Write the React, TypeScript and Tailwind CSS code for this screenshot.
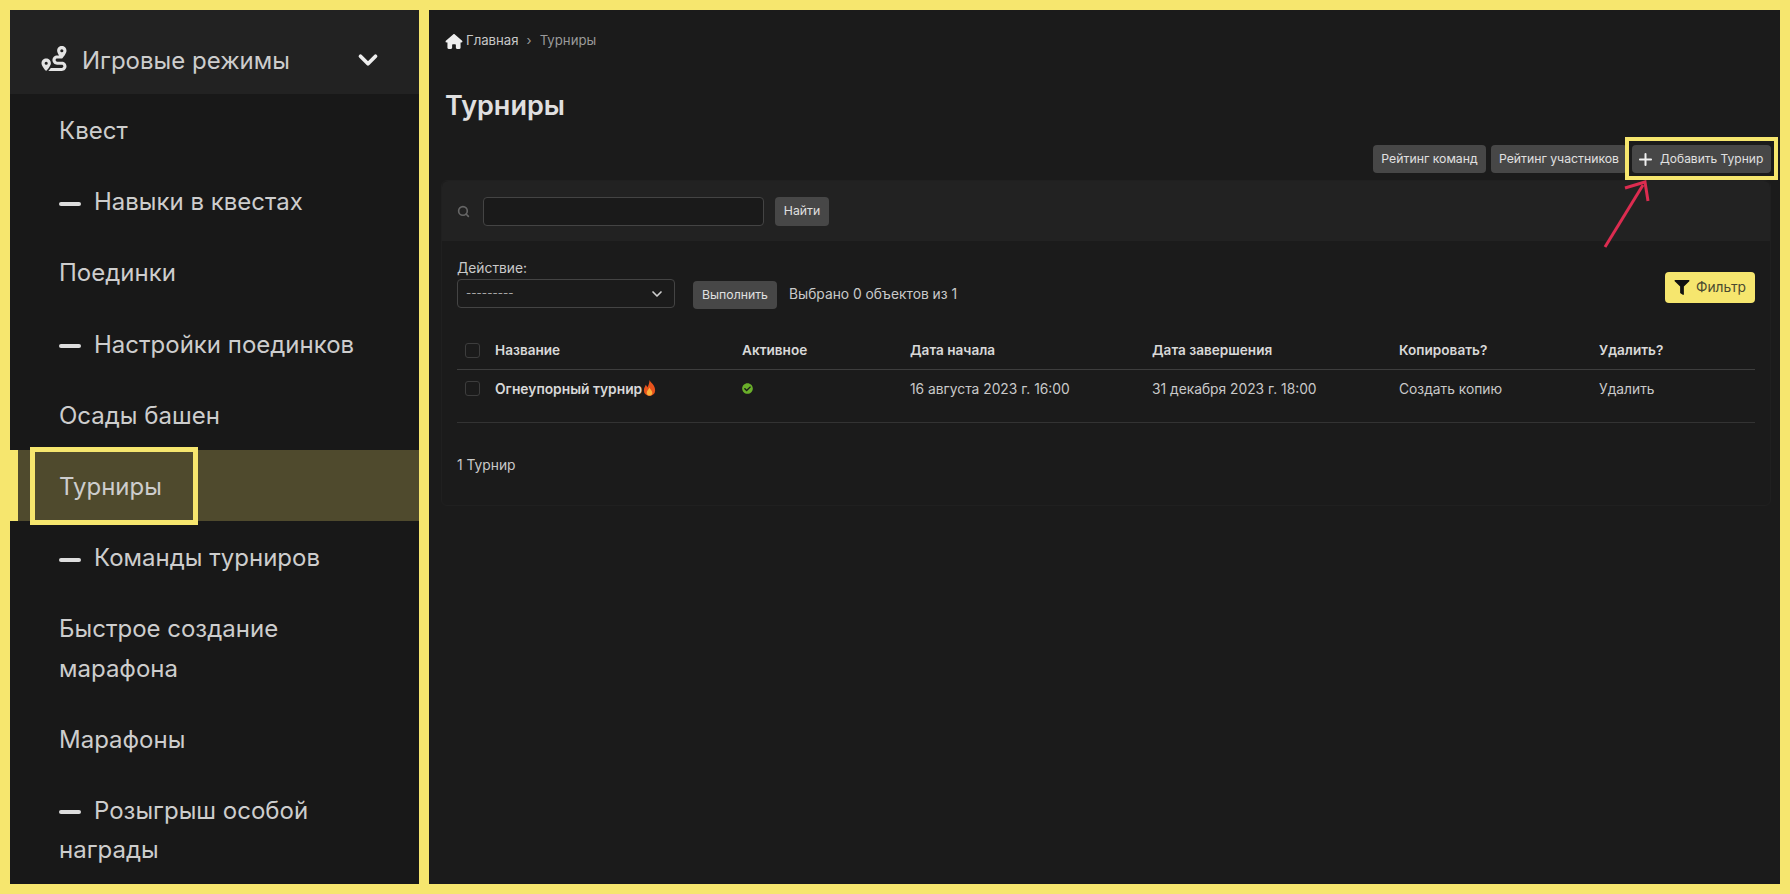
import React from "react";
import { ChevronDown, Search, Plus } from "lucide-react";
import { FaFilter, FaCheckCircle } from "react-icons/fa";
import { FaRoute, FaHouse } from "react-icons/fa6";

const font = "font-['Inter','Liberation_Sans',sans-serif]";

function NavItem({ label, dash }: { label: string; dash?: boolean }) {
  return (
    <div className="px-[49px] pb-[15px] pt-[17px] text-[24px] leading-[39.2px] text-[#cdcdcd]">
      {dash && <span className="mr-[13px] inline-block h-[4px] w-[22px] rounded-sm bg-[#dddddd] align-middle" />}
      {label}
    </div>
  );
}

function Btn({ children, className = "" }: { children: React.ReactNode; className?: string }) {
  return (
    <div className={`flex items-center justify-center rounded-[4px] bg-[#474747] text-[12.25px] text-[#e0e0e0] ${className}`}>
      {children}
    </div>
  );
}

const gridCols = "grid grid-cols-[38px_247px_168px_242px_247px_200px_1fr]";

function Check() {
  return <div className="ml-2 h-[15px] w-[15px] rounded-[3px] border border-[#3d3d3d]" />;
}

export default function App() {
  return (
    <div className={`${font} relative flex h-[894px] w-[1790px] gap-[10px] overflow-hidden bg-[#f6e66e] p-[10px]`}>
      <aside className="relative w-[409px] shrink-0 overflow-hidden bg-[#181818]">
        <div className="flex h-[84px] items-center bg-[#222222] pl-[31px] pr-[36px] pt-[18px] text-[#cdcdcd]">
          <FaRoute className="mb-[5px] mr-[15px] h-[25px] w-[26px] text-[#e4e4e4]" />
          <span className="flex-1 text-[24px]">Игровые режимы</span>
          <ChevronDown className="mb-[2px] h-[30px] w-[30px] text-[#eeeeee]" strokeWidth={3} />
        </div>
        <NavItem label="Квест" />
        <NavItem label="Навыки в квестах" dash />
        <NavItem label="Поединки" />
        <NavItem label="Настройки поединков" dash />
        <NavItem label="Осады башен" />
        <div className="border-l-[8px] border-[#f6e66e] bg-[#4f4a2d]">
          <div className="px-[41px] pb-[15px] pt-[17px] text-[24px] leading-[39.2px] text-[#cdcdcd]">Турниры</div>
        </div>
        <NavItem label="Команды турниров" dash />
        <NavItem label="Быстрое создание марафона" />
        <NavItem label="Марафоны" />
        <NavItem label="Розыгрыш особой награды" dash />
      </aside>

      <main className="flex min-w-0 flex-1 flex-col bg-[#1b1b1b] pl-[12px] pr-[9px]">
        <div className="mt-[21px] flex h-[20px] items-center pl-[4px] text-[13.2px] text-[#9a9a9a]">
          <FaHouse className="mr-[3px] h-[15px] w-[18px] text-[#eeeeee]" />
          <span className="text-[#c8c8c8]">Главная</span>
          <span className="mx-[8px]">›</span>
          <span>Турниры</span>
        </div>
        <h1 className="mt-[37px] pl-[4px] text-[27px] font-semibold leading-[36px] text-[#e0e0e0]">Турниры</h1>
        <div className="mt-[21px] flex h-[28px] justify-end gap-[5px] text-nowrap">
          <Btn className="w-[113px]">Рейтинг команд</Btn>
          <Btn className="w-[136px]">Рейтинг участников</Btn>
          <Btn className="w-[139px] justify-start pl-[4px] text-[12px]">
            <Plus className="mr-[5px] h-[19px] w-[19px] text-[#f0f0f0]" strokeWidth={2.5} />
            Добавить Турнир
          </Btn>
        </div>

        <section className="mt-[7px] h-[326px] rounded-[6px] border border-[#202020] text-[13.8px] text-[#c9c9c9]">
          <div className="flex h-[60px] items-center rounded-t-[6px] bg-[#222222] pl-[15px]">
            <Search className="h-[13px] w-[13px] text-[#666666]" strokeWidth={3} />
            <div className="ml-[13px] h-[29px] w-[281px] rounded-[4px] border border-[#444444] bg-[#1a1a1a]" />
            <Btn className="ml-[11px] h-[29px] w-[54px]">Найти</Btn>
          </div>
          <div className="px-[15px]">
            <div className="relative flex items-end justify-between pt-[17px]">
              <div className="flex items-end">
                <div>
                  <div className="h-[21px] leading-[20px]">Действие:</div>
                  <div className="flex h-[29px] w-[218px] items-center justify-between rounded-[4px] border border-[#444444] pl-[8px] pr-[9px] text-[11.5px] text-[#a8a8a8]">
                    ---------
                    <ChevronDown className="h-[16px] w-[16px] text-[#cfcfcf]" strokeWidth={2.5} />
                  </div>
                </div>
                <Btn className="mb-[-1px] ml-[18px] h-[28px] w-[84px]">Выполнить</Btn>
                <span className="mb-[4px] ml-[12px] leading-[20px]">Выбрано 0 объектов из 1</span>
              </div>
              <div className="mb-[5px] flex h-[31px] w-[90px] items-center justify-center rounded-[4px] bg-[#f6e66e] text-[#4a4a30]">
                <FaFilter className="mr-[6px] h-[15px] w-[16px] text-[#111111]" />
                Фильтр
              </div>
            </div>

            <div className={`${gridCols} mt-[22px] h-[40px] items-center border-b border-[#3e3e3e] pt-[1px] text-[13.6px] font-semibold text-[#d8d8d8]`}>
              <Check />
              <span>Название</span>
              <span>Активное</span>
              <span>Дата начала</span>
              <span>Дата завершения</span>
              <span>Копировать?</span>
              <span>Удалить?</span>
            </div>
            <div className={`${gridCols} h-[53px] items-start border-b border-[#333333] pt-[9px] leading-[20px]`}>
              <div className="pt-[2px]"><Check /></div>
              <span className="flex items-center font-semibold text-[#d8d8d8]">
                Огнеупорный турнир
                <svg viewBox="0 0 16 18" className="mb-[2px] h-[17px] w-[15px]">
                  <path d="M8 0c1 3 6 5 6 11a6 6 0 0 1-12 0c0-3 1.500-4 2-6 1 1 1.500 2 1.500 3C7 6 8 3 8 0z" fill="#e8531c" />
                  <path d="M8 8c.5 2 3 3 3 5.500a3 3 0 0 1-6 0C5 11 7.500 10 8 8z" fill="#fbb03b" />
                </svg>
              </span>
              <span className="pt-[1px]"><FaCheckCircle className="mt-[3px] h-[11px] w-[11px] text-[#6aaf2a]" /></span>
              <span>16 августа 2023 г. 16:00</span>
              <span>31 декабря 2023 г. 18:00</span>
              <span>Создать копию</span>
              <span>Удалить</span>
            </div>
            <div className="mt-[32px] leading-[20px]">1 Турнир</div>
          </div>
        </section>
      </main>

      <div className="absolute left-[30px] top-[447px] h-[78px] w-[168px] border-[5px] border-[#f6e66e]" />
      <div className="absolute left-[1625px] top-[137px] h-[43px] w-[153px] border-[4px] border-[#f6e66e]" />
      <svg className="absolute left-[1595px] top-[175px] h-[80px] w-[60px]" viewBox="0 0 60 80" fill="none" stroke="#dc2c50" strokeWidth="3">
        <path d="M10 72 L48 10" />
        <path d="M30 13 L50 7 L53 26" />
      </svg>
    </div>
  );
}
